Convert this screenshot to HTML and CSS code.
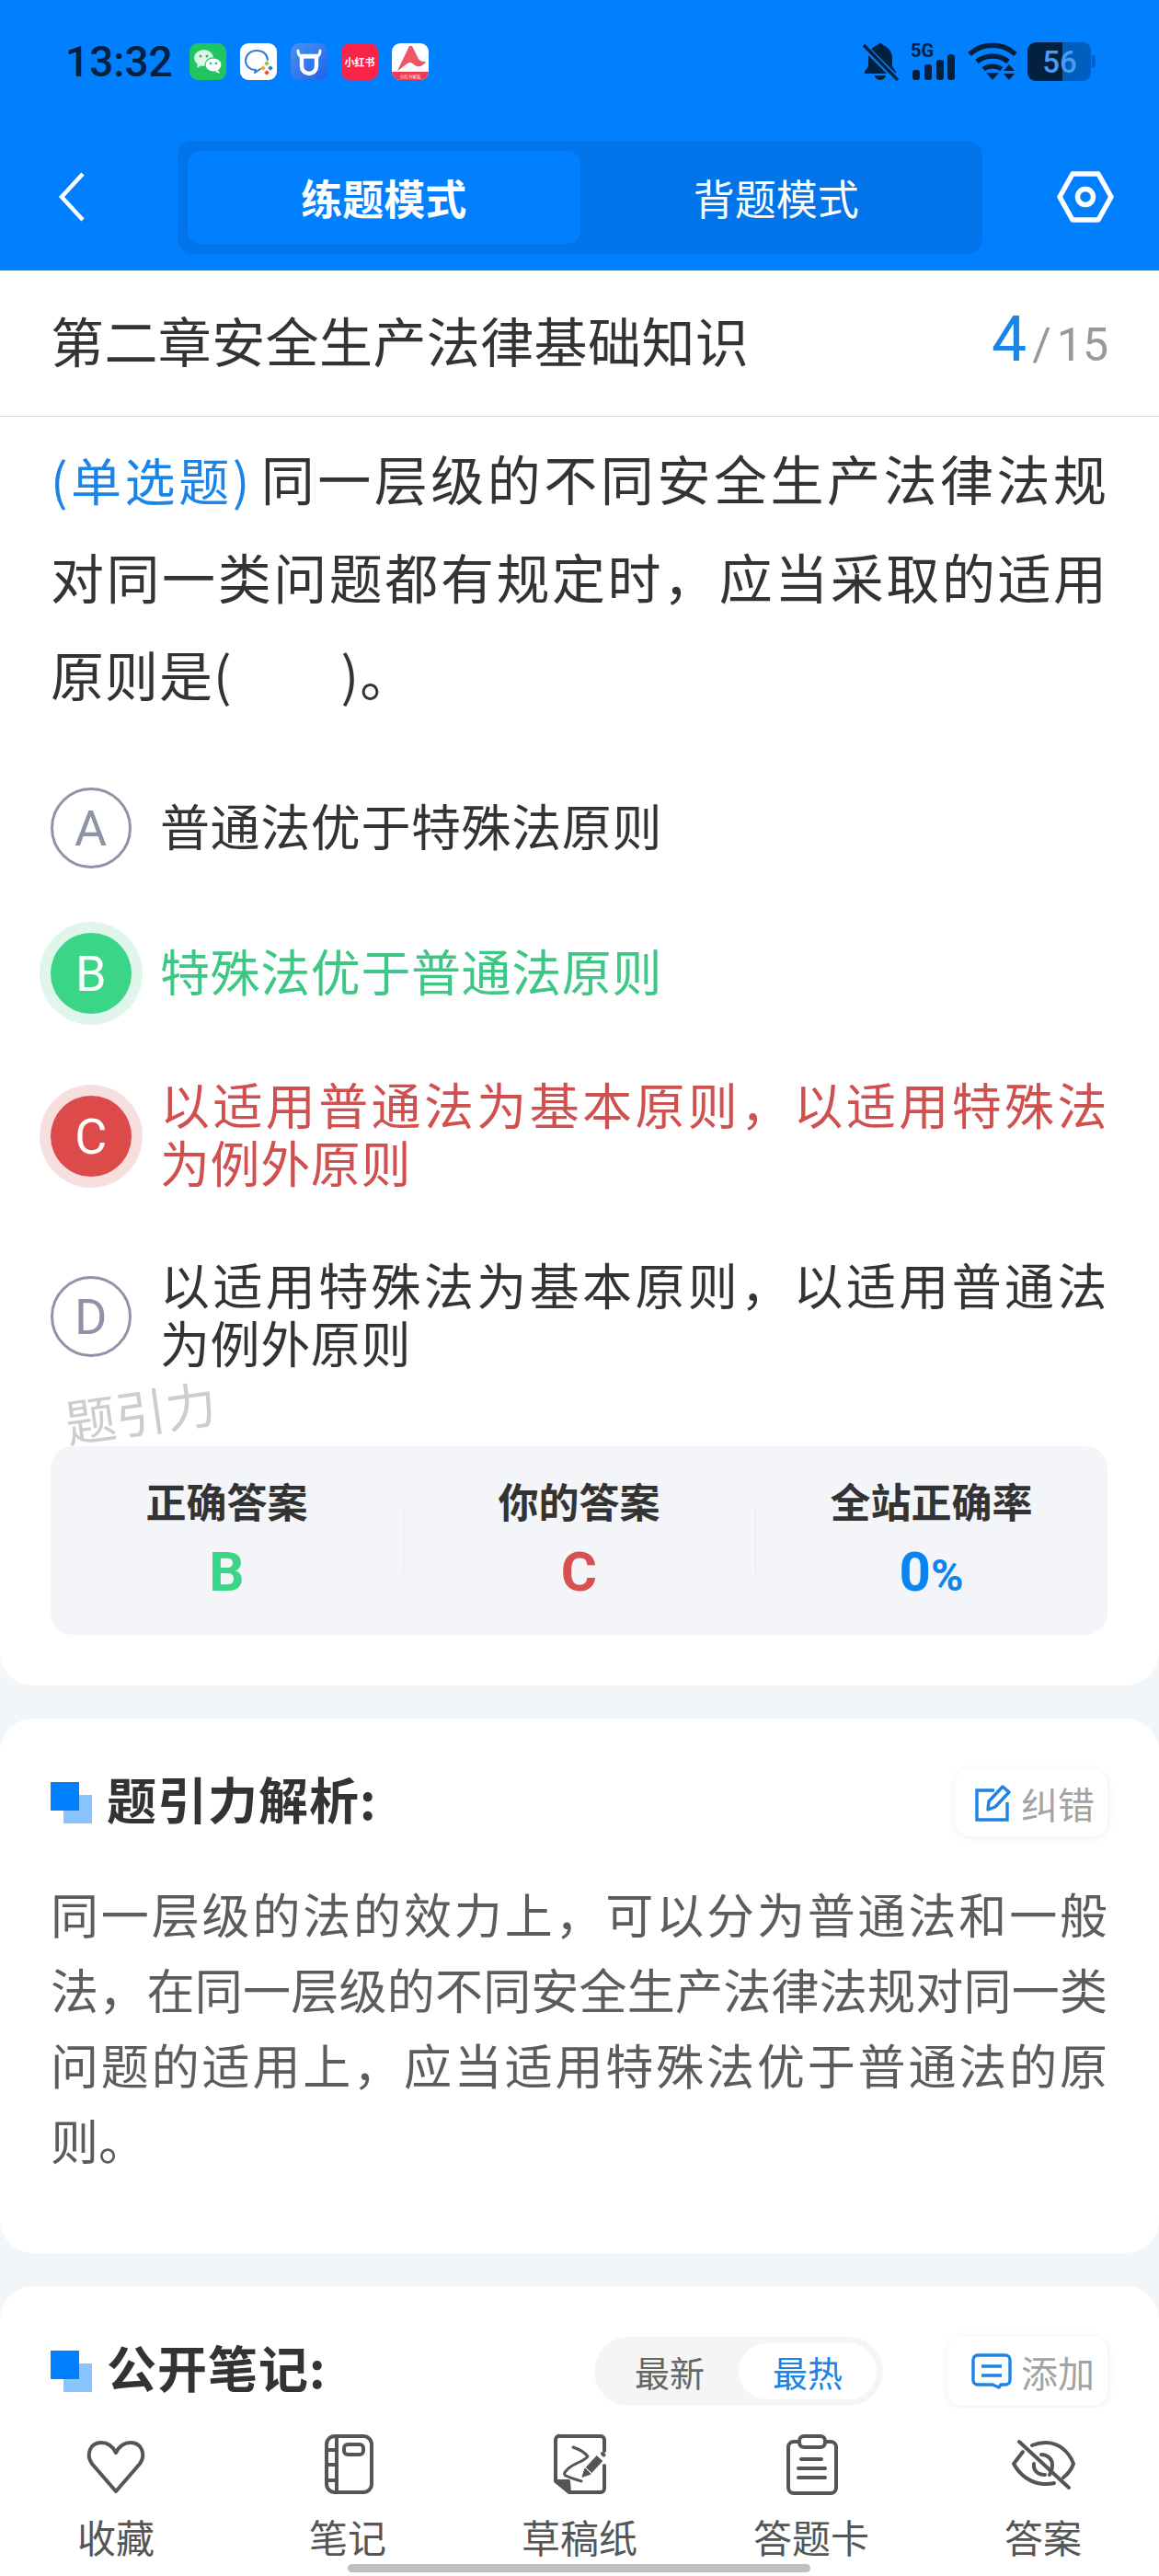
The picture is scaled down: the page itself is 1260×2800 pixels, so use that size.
FILE: index.html
```html
<!DOCTYPE html>
<html lang="zh-CN">
<head>
  <meta charset="UTF-8">
  <meta name="viewport" content="width=device-width, initial-scale=1.0">
  <title>练题模式</title>
  <link rel="stylesheet" href="styles.css">
</head>
<body>
  <div class="screen">
    <!-- 顶部蓝色区域 -->
    <header class="top">
      <div class="status">
        <span class="time">13:32</span>
        <div class="app-icons">
          <svg class="app" viewBox="0 0 40 40">
            <rect width="40" height="40" rx="9" fill="#1fc561"/>
            <ellipse cx="15.5" cy="16" rx="10.5" ry="9" fill="#dff5e6"/>
            <path d="M9 22l-1 5 5-3z" fill="#dff5e6"/>
            <ellipse cx="26" cy="23.5" rx="9" ry="7.6" fill="#fff" stroke="#1fc561" stroke-width="1.2"/>
            <path d="M31 29l2 4-5-2z" fill="#fff"/>
            <circle cx="12" cy="14" r="1.5" fill="#1fc561"/>
            <circle cx="19" cy="14" r="1.5" fill="#1fc561"/>
            <circle cx="23" cy="22" r="1.3" fill="#1fc561"/>
            <circle cx="29" cy="22" r="1.3" fill="#1fc561"/>
          </svg>
          <svg class="app" viewBox="0 0 40 40">
            <rect width="40" height="40" rx="9" fill="#fff"/>
            <path d="M30 18C29 11 24 8 18 8 11 8 6 13 6 19c0 6 5 10 11 10l-1 3 6-4" fill="none" stroke="#2b7bd8" stroke-width="2" stroke-linecap="round" stroke-linejoin="round"/>
            <rect x="27" y="20" width="4" height="4" transform="rotate(45 29 22)" fill="#8cc63f"/>
            <rect x="31" y="25" width="4" height="4" transform="rotate(45 33 27)" fill="#2b7bd8"/>
            <rect x="23" y="25" width="4" height="4" transform="rotate(45 25 27)" fill="#f5a623"/>
            <rect x="27" y="30" width="4" height="4" transform="rotate(45 29 32)" fill="#e8552d"/>
          </svg>
          <svg class="app" viewBox="0 0 40 40">
            <defs>
              <linearGradient id="cow" x1="0" y1="0" x2="1" y2="1">
                <stop offset="0" stop-color="#4a92ee"/>
                <stop offset="1" stop-color="#1f62ea"/>
              </linearGradient>
            </defs>
            <rect width="40" height="40" rx="9" fill="url(#cow)"/>
            <path d="M8 8c0 4 1 6 4 7h16c3-1 4-3 4-7" fill="none" stroke="#fff" stroke-width="3" stroke-linecap="round"/>
            <path d="M12 14h16v11a8 8 0 0 1-16 0z" fill="none" stroke="#fff" stroke-width="4.4"/>
          </svg>
          <svg class="app" viewBox="0 0 40 40">
            <rect width="40" height="40" rx="9" fill="#fb2348"/>
            <text x="20" y="25" text-anchor="middle" class="red-book">小红书</text>
          </svg>
          <svg class="app" viewBox="0 0 40 40">
            <rect width="40" height="40" rx="9" fill="#fff"/>
            <path d="M0 31h40a9 9 0 0 1-9 9H9a9 9 0 0 1-9-9z" fill="#ee3a53"/>
            <path d="M19 3h3l7 14c2 3 5 3 8 3-2 4-6 6-10 5-3-1-4-4-7-4-4 0-8 6-14 9z" fill="#f0566a"/>
            <text x="20" y="38" text-anchor="middle" class="mini-label">小红书家族</text>
          </svg>
        </div>
        <div class="sys-icons">
          <svg class="bell" viewBox="0 0 40 42">
            <path d="M19 1a4 4 0 0 0-3 2C9 5 6 11 6 17v9l-4 6v2h34v-2l-4-6v-9C32 11 28 5 22 3a4 4 0 0 0-3-2z" fill="#04203f"/>
            <path d="M13 36a6 5 0 0 0 12 0z" fill="#04203f"/>
            <path d="M0 3l38 38" stroke="#007fff" stroke-width="7"/>
            <path d="M1 3l37 38" stroke="#04203f" stroke-width="3.4"/>
          </svg>
          <svg class="signal" viewBox="0 -4 52 46">
            <text x="1" y="16" class="five-g">5G</text>
            <rect x="3" y="30" width="8" height="11" rx="3" fill="#04203f"/>
            <rect x="16" y="24" width="8" height="17" rx="3" fill="#04203f"/>
            <rect x="29" y="19" width="8" height="22" rx="3" fill="#04203f"/>
            <rect x="41" y="13" width="8" height="28" rx="3" fill="#04203f"/>
          </svg>
          <svg class="wifi" viewBox="0 0 54 42">
            <path d="M2 13c14-13 36-13 50 0" fill="none" stroke="#04203f" stroke-width="5.5"/>
            <path d="M10 21c10-8 24-8 34 0" fill="none" stroke="#04203f" stroke-width="5.5"/>
            <path d="M17 29c6-4 14-4 20 0" fill="none" stroke="#04203f" stroke-width="5"/>
            <path d="M20 33h14l-7 8z" fill="#04203f"/>
            <path d="M39 31h12l-6-7zM39 34h12l-6 7z" fill="#04203f"/>
          </svg>
          <svg class="battery" viewBox="0 0 74 42">
            <path d="M38 0h22a9 9 0 0 1 9 9v24a9 9 0 0 1-9 9H38z" fill="#005fbe"/>
            <path d="M38 0H9a9 9 0 0 0-9 9v24a9 9 0 0 0 9 9h29z" fill="#04203f"/>
            <path d="M70 14c2 0 3.500 1 3.500 3v8c0 2-1.500 3-3.500 3z" fill="#005fbe"/>
            <text x="35" y="33" text-anchor="middle" class="batt-num">56</text>
          </svg>
        </div>
      </div>
      <nav class="nav">
        <svg class="back" viewBox="0 0 32 56"><path d="M28 3L5 28l23 25" fill="none" stroke="#fff" stroke-width="4.500"/></svg>
        <div class="mode-tabs">
          <div class="mode active">练题模式</div>
          <div class="mode">背题模式</div>
        </div>
        <svg class="gear" viewBox="0 0 62 56">
          <path d="M17 3h28l14 25-14 25H17L3 28z" fill="none" stroke="#fff" stroke-width="5.500" stroke-linejoin="round"/>
          <circle cx="31" cy="28" r="8.500" fill="none" stroke="#fff" stroke-width="5.500"/>
        </svg>
      </nav>
    </header>

    <!-- 题目 -->
    <section class="card question-card">
      <div class="title-row">
        <h1 class="chapter">第二章安全生产法律基础知识</h1>
        <div class="progress"><span class="cur">4</span><span class="sep">/</span><span class="total">15</span></div>
      </div>
      <div class="question-body">
        <p class="question"><span class="qtype">(单选题)</span>同一层级的不同安全生产法律法规对同一类问题都有规定时，应当采取的适用原则是(　　)。</p>
        <div class="options">
          <div class="option">
            <span class="letter plain">A</span>
            <span class="opt-text">普通法优于特殊法原则</span>
          </div>
          <div class="option right">
            <span class="letter">B</span>
            <span class="opt-text">特殊法优于普通法原则</span>
          </div>
          <div class="option wrong">
            <span class="letter">C</span>
            <span class="opt-text">以适用普通法为基本原则，以适用特殊法为例外原则</span>
          </div>
          <div class="option">
            <span class="letter plain">D</span>
            <span class="opt-text">以适用特殊法为基本原则，以适用普通法为例外原则</span>
          </div>
        </div>
        <div class="watermark">题引力</div>
        <div class="stats">
          <div class="stat">
            <div class="stat-label">正确答案</div>
            <div class="stat-value green">B</div>
          </div>
          <div class="stat">
            <div class="stat-label">你的答案</div>
            <div class="stat-value red">C</div>
          </div>
          <div class="stat">
            <div class="stat-label">全站正确率</div>
            <div class="stat-value blue">0<small>%</small></div>
          </div>
        </div>
      </div>
    </section>

    <!-- 解析 -->
    <section class="card block analysis">
      <div class="block-head">
        <h2 class="block-title"><span class="squares"></span>题引力解析:</h2>
        <div class="small-btn">
          <svg class="btn-icon" viewBox="0 0 40 40">
            <path d="M21 6H2v32h33V19" fill="none" stroke="#1a84e8" stroke-width="3.400"/>
            <path d="M14 27l1-9L30 2l7 6-15 16z" fill="none" stroke="#1a84e8" stroke-width="3.400" stroke-linejoin="round"/>
          </svg>
          <span>纠错</span>
        </div>
      </div>
      <p class="analysis-text">同一层级的法的效力上，可以分为普通法和一般法，在同一层级的不同安全生产法律法规对同一类问题的适用上，应当适用特殊法优于普通法的原则。</p>
    </section>

    <!-- 笔记 -->
    <section class="card block notes">
      <div class="block-head">
        <h2 class="block-title"><span class="squares"></span>公开笔记:</h2>
        <div class="notes-tools">
          <div class="sort">
            <span class="sort-item">最新</span>
            <span class="sort-item on">最热</span>
          </div>
          <div class="small-btn">
            <svg class="btn-icon" viewBox="0 0 44 40">
              <path d="M7 2h30a5 5 0 0 1 5 5v22a5 5 0 0 1-5 5h-5l-2 3-7-3H7a5 5 0 0 1-5-5V7a5 5 0 0 1 5-5z" fill="none" stroke="#1a84e8" stroke-width="3.400" stroke-linejoin="round"/>
              <path d="M11 14h22M11 24h22" stroke="#1a84e8" stroke-width="3.400"/>
            </svg>
            <span>添加</span>
          </div>
        </div>
      </div>
    </section>

    <!-- 底部工具栏 -->
    <footer class="toolbar">
      <div class="tool">
        <svg class="tool-icon" viewBox="0 0 70 70">
          <path d="M35 63L9 33C2 23 7 10 19 10c8 0 13 5 16 11 3-6 8-11 16-11 12 0 17 13 10 23z"/>
        </svg>
        <span>收藏</span>
      </div>
      <div class="tool">
        <svg class="tool-icon" viewBox="0 0 70 70">
          <rect x="12" y="3" width="49" height="61" rx="9"/>
          <path d="M23 3v61M12 18h11M12 34h11M12 51h11"/>
          <rect x="31" y="12" width="21" height="11" rx="4"/>
        </svg>
        <span>笔记</span>
      </div>
      <div class="tool">
        <svg class="tool-icon" viewBox="0 0 70 70">
          <path d="M62 19V7a4 4 0 0 0-4-4H14a4 4 0 0 0-5 4v45l15 12h34a4 4 0 0 0 4-4V35"/>
          <path d="M10 52h13l1 12z" fill="#555"/>
          <path d="M28 15c6 2 12 5 16 10-3 5-14 7-21 13-4 4-6 6-3 8 4 2 11 4 17 6" stroke-width="3"/>
          <path d="M45 40l12-13" stroke-width="9" stroke-linecap="butt"/>
          <path d="M38 47l3-9 6 6z" fill="#555" stroke-width="1"/>
          <path d="M60 22l1.500 1.500" stroke-width="4"/>
        </svg>
        <span>草稿纸</span>
      </div>
      <div class="tool">
        <svg class="tool-icon" viewBox="0 0 70 70">
          <path d="M22 9h-6a6 6 0 0 0-6 6v44a6 6 0 0 0 6 6h40a6 6 0 0 0 6-6V15a6 6 0 0 0-6-6h-6"/>
          <rect x="22" y="3" width="28" height="12" rx="5"/>
          <path d="M24 28h22M21 38h29M21 48h29"/>
        </svg>
        <span>答题卡</span>
      </div>
      <div class="tool">
        <svg class="tool-icon" viewBox="0 0 70 70">
          <path d="M9 9l54 50"/>
          <path d="M13 20L3 33c7 13 19 21 32 22 4 0 8 0 12-1"/>
          <path d="M23 13c5-2 10-3 15-3 13 0 25 9 30 23-2 6-6 11-11 15"/>
          <path d="M33 23c7 0 12 5 12 11 0 4-1 8-3 11"/>
          <path d="M25 33c-1 7 4 12 12 12"/>
        </svg>
        <span>答案</span>
      </div>
      <div class="home-bar"></div>
    </footer>
  </div>
</body>
</html>
```

FILE: styles.css
```css
* {
  box-sizing: border-box;
}

body {
  margin: 0;
  background: #f3f6f9;
  font-family: "Noto Sans CJK SC", "Noto Sans", sans-serif;
  color: #333;
}

.screen {
  position: relative;
  width: 1260px;
  height: 2800px;
  overflow: hidden;
}

/* 顶部 */
.top {
  background: #007fff;
  height: 294px;
}

.status {
  display: flex;
  align-items: center;
  height: 134px;
  padding: 0 69px 0 71px;
}

.time {
  font-family: Roboto, sans-serif;
  font-size: 46px;
  font-weight: 500;
  color: #04203f;
  width: 135px;
}

.app-icons {
  display: flex;
  gap: 15px;
}

.app {
  width: 40px;
  height: 40px;
}

.red-book {
  font-size: 11px;
  font-weight: 700;
  fill: #fff;
}

.mini-label {
  font-size: 4.500px;
  fill: #fff;
}

.sys-icons {
  margin: -4px 0 0 auto;
  display: flex;
  align-items: flex-end;
  gap: 11px;
}

.bell {
  width: 40px;
  height: 42px;
}

.signal {
  width: 52px;
  height: 46px;
}

.wifi {
  width: 54px;
  height: 42px;
}

.battery {
  width: 74px;
  height: 42px;
}

.five-g {
  font-family: Roboto, sans-serif;
  font-size: 20px;
  font-weight: 700;
  fill: #04203f;
}

.batt-num {
  font-family: Roboto, sans-serif;
  font-size: 33px;
  font-weight: 500;
  fill: #4a9cf0;
}

.nav {
  display: flex;
  align-items: center;
  height: 160px;
  padding: 0 49px 0 62px;
}

.back {
  width: 32px;
  height: 56px;
}

.mode-tabs {
  display: flex;
  width: 875px;
  height: 123px;
  margin-left: 99px;
  padding: 11px;
  background: #0074e8;
  border-radius: 16px;
}

.mode {
  flex: 1;
  display: flex;
  justify-content: center;
  align-items: center;
  font-size: 45px;
  color: #fff;
  border-radius: 14px;
}

.mode.active {
  background: #007fff;
  font-weight: 700;
}

.gear {
  width: 62px;
  height: 56px;
  margin-left: auto;
}

/* 卡片 */
.card {
  background: #fff;
  border-radius: 36px;
}

.question-card {
  border-radius: 0 0 36px 36px;
  height: 1538px;
}

.title-row {
  display: flex;
  justify-content: space-between;
  align-items: center;
  height: 159px;
  padding: 0 55px 8px 55px;
  border-bottom: 1px solid #dcdcdc;
}

.chapter {
  margin: 0;
  font-size: 58px;
  font-weight: 400;
  letter-spacing: 0.4px;
  color: #333;
}

.progress {
  display: flex;
  align-items: baseline;
  font-family: Roboto, sans-serif;
  color: #999;
  font-size: 50px;
}

.cur {
  font-size: 68px;
  color: #1a84e8;
}

.sep {
  margin: 0 6px;
}

.question-body {
  position: relative;
  padding: 13px 56px 0 55px;
}

.question {
  margin: 0;
  font-size: 58px;
  letter-spacing: 1px;
  line-height: 106px;
  text-align: justify;
}

.qtype {
  margin-right: 9px;
  font-size: 55px;
  color: #1a84e8;
}

.options {
  display: flex;
  flex-direction: column;
  gap: 70px;
  margin-top: 71px;
}

.option {
  display: flex;
  align-items: center;
  gap: 31px;
  font-size: 54px;
  letter-spacing: 0.6px;
  line-height: 63px;
  min-height: 88px;
}

.opt-text {
  flex: 1;
  margin-top: -4px;
  padding-bottom: 4px;
  text-align: justify;
}

.letter {
  flex: none;
  display: flex;
  justify-content: center;
  align-items: center;
  width: 88px;
  height: 88px;
  border-radius: 50%;
  font-family: Roboto, sans-serif;
  font-size: 54px;
  color: #fff;
}

.letter.plain {
  border: 3px solid #8f93a8;
  color: #8f93a8;
}

.right .letter {
  background: #3bd588;
  box-shadow: 0 0 0 12px #e0f6ea;
}

.right .opt-text {
  color: #3cc784;
}

.wrong .letter {
  background: #dd4a4a;
  box-shadow: 0 0 0 12px #f7dfdf;
}

.wrong .opt-text {
  color: #d04f4f;
}

.watermark {
  position: absolute;
  left: 70px;
  top: 1040px;
  font-size: 55px;
  color: #cdcdcd;
  transform: rotate(-8deg);
}

.stats {
  display: grid;
  grid-template-columns: repeat(3, 1fr);
  height: 205px;
  margin-top: 78px;
  padding-top: 29px;
  background: #f3f5f8;
  border-radius: 24px;
}

.stat {
  position: relative;
  text-align: center;
}

.stat + .stat::before {
  content: "";
  position: absolute;
  left: 0;
  top: 37px;
  height: 72px;
  border-left: 1px solid #e7e9ec;
}

.stat-label {
  font-size: 44px;
  line-height: 60px;
  font-weight: 700;
}

.stat-value {
  margin-top: 8px;
  font-family: Roboto, sans-serif;
  font-size: 60px;
  line-height: 80px;
  font-weight: 700;
}

.stat-value small {
  font-size: 48px;
}

.green {
  color: #3bd588;
}

.red {
  color: #d85050;
}

.blue {
  color: #0a84f0;
}

/* 解析、笔记 */
.block {
  margin-top: 36px;
  padding: 55px 56px 0 55px;
}

.analysis {
  height: 581px;
}

.block-head {
  display: flex;
  justify-content: space-between;
  align-items: center;
  height: 73px;
}

.notes .block-head {
  height: 75px;
}

.block-title {
  display: flex;
  align-items: center;
  margin: 0;
  padding-bottom: 10px;
  font-size: 54px;
  font-weight: 700;
  letter-spacing: 1px;
}

.squares {
  position: relative;
  width: 45px;
  height: 45px;
  margin: 10px 16px 0 0;
  background: linear-gradient(#8ac4ff, #8ac4ff) 14px 14px / 31px 31px no-repeat;
}

.squares::before {
  content: "";
  position: absolute;
  left: 0;
  top: 0;
  width: 31px;
  height: 31px;
  background: #007fff;
}

.small-btn {
  display: flex;
  align-items: center;
  gap: 10px;
  height: 73px;
  padding: 0 14px 0 22px;
  background: #fff;
  border-radius: 16px;
  box-shadow: 0 1px 10px rgba(0, 0, 0, 0.07);
  font-size: 40px;
  color: #a3a3a3;
}

.btn-icon {
  width: 40px;
  height: 40px;
}

.analysis-text {
  margin: 43px 0 0;
  font-size: 52px;
  line-height: 82px;
  color: #5c5c5c;
  text-align: justify;
}

.notes {
  height: 400px;
  border-radius: 36px 36px 0 0;
}

.notes .small-btn {
  height: 75px;
  padding-left: 26px;
}

.notes .btn-icon {
  width: 44px;
}

.notes-tools {
  display: flex;
  align-items: center;
  gap: 70px;
}

.sort {
  display: flex;
  align-items: center;
  width: 314px;
  height: 75px;
  padding: 7px;
  background: #f5f5f5;
  border-radius: 38px;
}

.sort-item {
  flex: 1;
  height: 61px;
  border-radius: 31px;
  font-size: 38px;
  line-height: 61px;
  text-align: center;
  color: #666;
}

.sort-item.on {
  flex: none;
  width: 150px;
  background: #fff;
  color: #1a84e8;
}

/* 底部工具栏 */
.toolbar {
  position: absolute;
  left: 0;
  right: 0;
  bottom: 0;
  height: 183px;
  display: grid;
  grid-template-columns: repeat(5, 1fr);
  padding-top: 28px;
  background: #fff;
}

.tool {
  display: flex;
  flex-direction: column;
  align-items: center;
  gap: 14px;
  font-size: 42px;
  line-height: 56px;
  color: #555;
}

.tool-icon {
  width: 70px;
  height: 70px;
  fill: none;
  stroke: #555;
  stroke-width: 4;
  stroke-linecap: round;
  stroke-linejoin: round;
}

.home-bar {
  position: absolute;
  left: 378px;
  bottom: 4px;
  width: 503px;
  height: 9px;
  border-radius: 5px;
  background: #bfbfbf;
}
```
